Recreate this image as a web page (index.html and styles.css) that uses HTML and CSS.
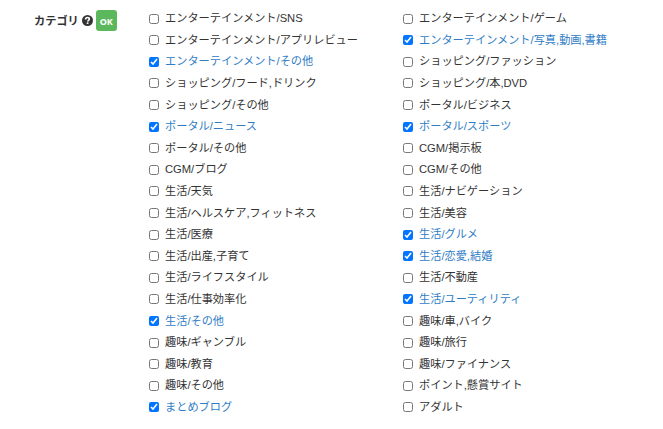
FILE: index.html
```html
<!DOCTYPE html>
<html lang="ja">
<head>
    <meta charset="UTF-8">
    <meta name="viewport" content="width=device-width, initial-scale=1.0">
    <title>カテゴリ</title>
    <link rel="stylesheet" href="styles.css">
</head>
<body>

    <div class="form-group">
        <div class="control-label">
            <span class="label-text">カテゴリ</span>
            <svg class="help-icon" viewBox="0 0 16 16">
                <circle cx="8" cy="8" r="8" fill="#333"/>
                <path d="M5.2 6.4C5.2 4.5 6.4 3.6 8 3.6s2.7.9 2.7 2.3c0 1.8-2.5 1.8-2.5 3.7" fill="none" stroke="#fff" stroke-width="2.3"/>
                <rect x="6.9" y="10.7" width="2.5" height="2.3" fill="#fff"/>
            </svg>
            <span class="badge-ok">OK</span>
        </div>

        <div class="category-list">
            <label><input type="checkbox"><span>エンターテインメント/SNS</span></label>
            <label><input type="checkbox"><span>エンターテインメント/ゲーム</span></label>
            <label><input type="checkbox"><span>エンターテインメント/アプリレビュー</span></label>
            <label><input type="checkbox" checked><span>エンターテインメント/写真,動画,書籍</span></label>
            <label><input type="checkbox" checked><span>エンターテインメント/その他</span></label>
            <label><input type="checkbox"><span>ショッピング/ファッション</span></label>
            <label><input type="checkbox"><span>ショッピング/フード,ドリンク</span></label>
            <label><input type="checkbox"><span>ショッピング/本,DVD</span></label>
            <label><input type="checkbox"><span>ショッピング/その他</span></label>
            <label><input type="checkbox"><span>ポータル/ビジネス</span></label>
            <label><input type="checkbox" checked><span>ポータル/ニュース</span></label>
            <label><input type="checkbox" checked><span>ポータル/スポーツ</span></label>
            <label><input type="checkbox"><span>ポータル/その他</span></label>
            <label><input type="checkbox"><span>CGM/掲示板</span></label>
            <label><input type="checkbox"><span>CGM/ブログ</span></label>
            <label><input type="checkbox"><span>CGM/その他</span></label>
            <label><input type="checkbox"><span>生活/天気</span></label>
            <label><input type="checkbox"><span>生活/ナビゲーション</span></label>
            <label><input type="checkbox"><span>生活/ヘルスケア,フィットネス</span></label>
            <label><input type="checkbox"><span>生活/美容</span></label>
            <label><input type="checkbox"><span>生活/医療</span></label>
            <label><input type="checkbox" checked><span>生活/グルメ</span></label>
            <label><input type="checkbox"><span>生活/出産,子育て</span></label>
            <label><input type="checkbox" checked><span>生活/恋愛,結婚</span></label>
            <label><input type="checkbox"><span>生活/ライフスタイル</span></label>
            <label><input type="checkbox"><span>生活/不動産</span></label>
            <label><input type="checkbox"><span>生活/仕事効率化</span></label>
            <label><input type="checkbox" checked><span>生活/ユーティリティ</span></label>
            <label><input type="checkbox" checked><span>生活/その他</span></label>
            <label><input type="checkbox"><span>趣味/車,バイク</span></label>
            <label><input type="checkbox"><span>趣味/ギャンブル</span></label>
            <label><input type="checkbox"><span>趣味/旅行</span></label>
            <label><input type="checkbox"><span>趣味/教育</span></label>
            <label><input type="checkbox"><span>趣味/ファイナンス</span></label>
            <label><input type="checkbox"><span>趣味/その他</span></label>
            <label><input type="checkbox"><span>ポイント,懸賞サイト</span></label>
            <label><input type="checkbox" checked><span>まとめブログ</span></label>
            <label><input type="checkbox"><span>アダルト</span></label>
        </div>
    </div>

</body>
</html>
```

FILE: styles.css
```css
body {
    margin: 0;
    background-color: #fff;
    color: #333;
    font-family: "Liberation Sans", "Noto Sans CJK JP", sans-serif;
    font-size: 11.2px;
    line-height: 16px;
}

.form-group {
    display: flex;
    padding: 7px 0 0 34px;
}

/* Left column */
.control-label {
    display: flex;
    align-items: center;
    width: 115px;
    height: 21px;
    padding-top: 3px;
    font-weight: bold;
}

.help-icon {
    width: 11px;
    height: 11px;
    margin: 0 3px 0 3px;
}

.badge-ok {
    width: 21px;
    height: 21px;
    border-radius: 3px;
    background-color: #5cb85c;
    color: #fff;
    font-family: "Noto Sans", sans-serif;
    font-size: 9px;
    line-height: 23px;
    text-align: center;
}

/* Two column list of categories */
.category-list {
    display: grid;
    grid-template-columns: 254px 254px;
    grid-auto-rows: 21.6px;
    padding-top: 0.4px;
}

.category-list label {
    display: flex;
    align-items: center;
    white-space: nowrap;
}

.category-list input {
    width: 10px;
    height: 10px;
    margin: 1px 6px 0 0;
}

.category-list input:checked + span {
    color: #2f7dc6;
}
```
